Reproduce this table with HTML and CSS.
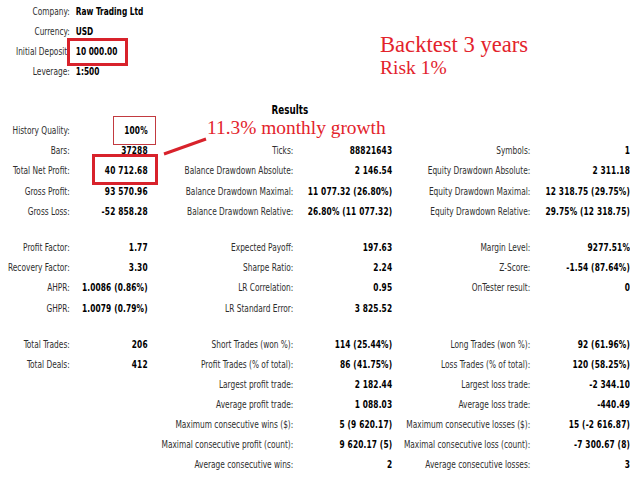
FILE: index.html
```html
<!DOCTYPE html>
<html>
<head>
<meta charset="utf-8">
<link rel="stylesheet" href="styles.css">
</head>
<body>
<div class="page">
  <div class="report">
    <div class="info">
      <div class="info-row"><span class="lbl">Company:</span><span class="val">Raw Trading Ltd</span></div>
      <div class="info-row"><span class="lbl">Currency:</span><span class="val">USD</span></div>
      <div class="info-row"><span class="lbl">Initial Deposit:</span><span class="val">10 000.00</span></div>
      <div class="info-row"><span class="lbl">Leverage:</span><span class="val">1:500</span></div>
    </div>

    <div class="title">Results</div>

    <div class="grid">
      <span class="l">History Quality:</span><span class="v">100%</span><span class="l"></span><span class="v"></span><span class="l"></span><span class="v"></span>
      <span class="l">Bars:</span><span class="v">37288</span><span class="l">Ticks:</span><span class="v">88821643</span><span class="l">Symbols:</span><span class="v">1</span>
      <span class="l">Total Net Profit:</span><span class="v">40 712.68</span><span class="l">Balance Drawdown Absolute:</span><span class="v">2 146.54</span><span class="l">Equity Drawdown Absolute:</span><span class="v">2 311.18</span>
      <span class="l">Gross Profit:</span><span class="v">93 570.96</span><span class="l">Balance Drawdown Maximal:</span><span class="v">11 077.32 (26.80%)</span><span class="l">Equity Drawdown Maximal:</span><span class="v">12 318.75 (29.75%)</span>
      <span class="l">Gross Loss:</span><span class="v">-52 858.28</span><span class="l">Balance Drawdown Relative:</span><span class="v">26.80% (11 077.32)</span><span class="l">Equity Drawdown Relative:</span><span class="v">29.75% (12 318.75)</span>

      <div class="spacer"></div>

      <span class="l">Profit Factor:</span><span class="v">1.77</span><span class="l">Expected Payoff:</span><span class="v">197.63</span><span class="l">Margin Level:</span><span class="v">9277.51%</span>
      <span class="l">Recovery Factor:</span><span class="v">3.30</span><span class="l">Sharpe Ratio:</span><span class="v">2.24</span><span class="l">Z-Score:</span><span class="v">-1.54 (87.64%)</span>
      <span class="l">AHPR:</span><span class="v">1.0086 (0.86%)</span><span class="l">LR Correlation:</span><span class="v">0.95</span><span class="l">OnTester result:</span><span class="v">0</span>
      <span class="l">GHPR:</span><span class="v">1.0079 (0.79%)</span><span class="l">LR Standard Error:</span><span class="v">3 825.52</span><span class="l"></span><span class="v"></span>

      <div class="spacer"></div>

      <span class="l">Total Trades:</span><span class="v">206</span><span class="l">Short Trades (won %):</span><span class="v">114 (25.44%)</span><span class="l">Long Trades (won %):</span><span class="v">92 (61.96%)</span>
      <span class="l">Total Deals:</span><span class="v">412</span><span class="l">Profit Trades (% of total):</span><span class="v">86 (41.75%)</span><span class="l">Loss Trades (% of total):</span><span class="v">120 (58.25%)</span>
      <span class="l"></span><span class="v"></span><span class="l">Largest profit trade:</span><span class="v">2 182.44</span><span class="l">Largest loss trade:</span><span class="v">-2 344.10</span>
      <span class="l"></span><span class="v"></span><span class="l">Average profit trade:</span><span class="v">1 088.03</span><span class="l">Average loss trade:</span><span class="v">-440.49</span>
      <span class="l"></span><span class="v"></span><span class="l">Maximum consecutive wins ($):</span><span class="v">5 (9 620.17)</span><span class="l">Maximum consecutive losses ($):</span><span class="v">15 (-2 616.87)</span>
      <span class="l"></span><span class="v"></span><span class="l">Maximal consecutive profit (count):</span><span class="v">9 620.17 (5)</span><span class="l">Maximal consecutive loss (count):</span><span class="v">-7 300.67 (8)</span>
      <span class="l"></span><span class="v"></span><span class="l">Average consecutive wins:</span><span class="v">2</span><span class="l">Average consecutive losses:</span><span class="v">3</span>
    </div>
  </div>

  <div class="note note-backtest">Backtest 3 years</div>
  <div class="note note-risk">Risk 1%</div>
  <div class="note note-growth">11.3% monthly growth</div>

  <div class="box box-deposit"></div>
  <div class="box-thin box-quality"></div>
  <div class="box box-profit"></div>
  <svg class="arrow" width="640" height="480" viewBox="0 0 640 480">
    <line x1="164" y1="154" x2="206" y2="139" stroke="#d8222b" stroke-width="3"/>
  </svg>
</div>
</body>
</html>
```

FILE: styles.css
```css
html, body {
  margin: 0;
  padding: 0;
  background: #ffffff;
}

.page {
  position: relative;
  width: 640px;
  height: 480px;
  overflow: hidden;
  font-family: "DejaVu Sans Condensed", "DejaVu Sans", sans-serif;
  font-size: 11px;
  line-height: 20px;
  color: #2e2e2e;
}

/* The report is a horizontally squeezed MT5 table: lay it out at
   4/3 width and compress it to the page width. */
.report {
  width: 853px;
  transform: scaleX(0.75);
  transform-origin: 0 0;
}

.info {
  padding-top: 2px;
}

.info-row {
  display: flex;
  height: 20px;
}

.info-row .lbl {
  width: 93px;
  text-align: right;
  white-space: nowrap;
  flex: none;
}

.info-row .val {
  margin-left: 8px;
  font-weight: bold;
  color: #000;
  white-space: nowrap;
}

.title {
  margin-top: 18px;
  width: 773px;
  text-align: center;
  font-weight: bold;
  font-size: 13px;
  color: #000;
  height: 20px;
}

.grid {
  margin-top: 1px;
  display: grid;
  grid-template-columns: 93px 104px 194px 132px 184px 133px;
  grid-template-rows: repeat(5, 20.2px) 16px repeat(4, 20.2px) 16px repeat(7, 20px);
}

.grid .l,
.grid .v {
  white-space: nowrap;
  justify-self: end;
}

.grid .v {
  font-weight: bold;
  color: #000;
  letter-spacing: 0.2px;
}

.grid .spacer {
  grid-column: 1 / -1;
}

.note {
  position: absolute;
  font-family: "Liberation Serif", serif;
  color: #e3232c;
  white-space: nowrap;
}

.note-backtest {
  left: 380px;
  top: 34px;
  font-size: 22.6px;
  line-height: 22px;
}

.note-risk {
  left: 380px;
  top: 58px;
  font-size: 19.5px;
  line-height: 20px;
}

.note-growth {
  left: 207px;
  top: 118px;
  font-size: 19.4px;
  line-height: 20px;
}

.box {
  position: absolute;
  border: 3px solid #d8222b;
  box-sizing: border-box;
}

.box-deposit {
  left: 67px;
  top: 38px;
  width: 61px;
  height: 28px;
}

.box-profit {
  left: 92px;
  top: 154px;
  width: 66px;
  height: 31px;
}

.box-thin {
  position: absolute;
  border: 1px solid #c23a40;
  box-sizing: border-box;
}

.box-quality {
  left: 113px;
  top: 116px;
  width: 43px;
  height: 29px;
}

.arrow {
  position: absolute;
  left: 0;
  top: 0;
  pointer-events: none;
}
```
